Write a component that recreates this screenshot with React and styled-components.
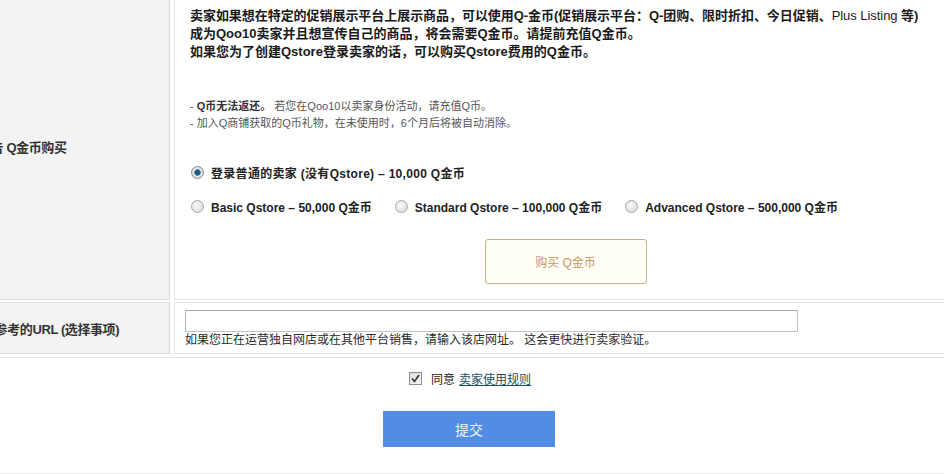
import styled, { createGlobalStyle, css } from "styled-components";

const GlobalStyle = createGlobalStyle`
  html, body {
    margin: 0;
    padding: 0;
    background: #fff;
    overflow: hidden;
  }
  body {
    font-family: "Liberation Sans", "Noto Sans CJK SC", sans-serif;
    color: #222;
  }
`;

const plans = [
  { id: "basic", label: "Basic Qstore – 50,000 Q金币" },
  { id: "standard", label: "Standard Qstore – 100,000 Q金币" },
  { id: "advanced", label: "Advanced Qstore – 500,000 Q金币" },
];

export default function App() {
  return (
    <>
      <GlobalStyle />
      <Page>
        <FormTable>
          <LabelCell $indent="0px">广告 Q金币购买</LabelCell>
          <ContentCell $pad="14px 15px 15px">
            <Intro>
              <Tight>
                卖家如果想在特定的促销展示平台上展示商品，可以使用Q-金币(促销展示平台：Q-团购、限时折扣、今日促销、<Plain>Plus Listing</Plain> 等)
              </Tight>
              <br />
              成为Qoo10卖家并且想宣传自己的商品，将会需要Q金币。请提前充值Q金币。
              <br />
              如果您为了创建Qstore登录卖家的话，可以购买Qstore费用的Q金币。
            </Intro>
            <Notes>
              <li>- <b>Q币无法返还。</b> 若您在Qoo10以卖家身份活动，请充值Q币。</li>
              <li>- 加入Q商铺获取的Q币礼物，在未使用时，6个月后将被自动消除。</li>
            </Notes>
            <RadioRow $top="30px">
              <RadioItem $wide>
                <Radio $checked />
                登录普通的卖家 (没有Qstore) – 10,000 Q金币
              </RadioItem>
            </RadioRow>
            <RadioRow $top="14px">
              {plans.map((p) => (
                <RadioItem key={p.id}>
                  <Radio />
                  {p.label}
                </RadioItem>
              ))}
            </RadioRow>
            <BuyRow>
              <BuyButton type="button">购买 Q金币</BuyButton>
            </BuyRow>
          </ContentCell>

          <LabelCell $indent="4px">可参考的URL (选择事项)</LabelCell>
          <ContentCell $pad="7px 10px 4px">
            <UrlInput type="text" />
            <Help>如果您正在运营独自网店或在其他平台销售，请输入该店网址。 这会更快进行卖家验证。</Help>
          </ContentCell>
        </FormTable>

        <Footer>
          <AgreeRow>
            <CheckBox>
              <svg width="9" height="9" viewBox="0 0 9 9">
                <polyline points="1,4.5 3.5,7.5 8,1" fill="none" stroke="#333" strokeWidth="1.6" />
              </svg>
            </CheckBox>
            同意 <TermsLink href="#">卖家使用规则</TermsLink>
          </AgreeRow>
          <SubmitButton type="button">提交</SubmitButton>
        </Footer>
      </Page>
    </>
  );
}

const Page = styled.div`
  margin: -8px 0 0 -22px;
  width: calc(100% + 22px);
`;

const FormTable = styled.div`
  display: grid;
  grid-template-columns: 192px 1fr;
  column-gap: 4px;
  row-gap: 2px;
`;

const LabelCell = styled.div`
  display: flex;
  align-items: center;
  padding-left: ${(p) => p.$indent};
  background: #f3f3f3;
  border-top: 1px solid #dedede;
  border-bottom: 1px solid #dedede;
  border-right: 1px solid #d8d8d8;
  font-size: 13px;
  font-weight: bold;
  letter-spacing: -0.4px;
  color: #333;
  white-space: nowrap;
  overflow: hidden;
`;

const ContentCell = styled.div`
  padding: ${(p) => p.$pad};
  border-top: 1px solid #e4e4e4;
  border-bottom: 1px solid #e4e4e4;
  border-left: 1px solid #e4e4e4;
`;

const Intro = styled.p`
  margin: 0;
  font-size: 13px;
  line-height: 18px;
  font-weight: bold;
  color: #1a1a1a;
  white-space: nowrap;
`;

const Tight = styled.span`
  letter-spacing: -0.05px;
`;

const Plain = styled.span`
  font-weight: normal;
`;

const Notes = styled.ul`
  list-style: none;
  margin: 37px 0 0;
  padding: 0;
  font-size: 11px;
  line-height: 17px;
  color: #555;

  b {
    color: #333;
  }
`;

const RadioRow = styled.div`
  display: flex;
  align-items: center;
  gap: 22px;
  height: 20px;
  margin-top: ${(p) => p.$top};
`;

const RadioItem = styled.label`
  display: flex;
  align-items: center;
  gap: 7px;
  font-size: 12px;
  font-weight: bold;
  color: #222;
  white-space: nowrap;
  letter-spacing: ${(p) => (p.$wide ? "0.3px" : "0")};
`;

const Radio = styled.span`
  width: 11px;
  height: 11px;
  margin-left: 1px;
  border-radius: 50%;
  border: 1px solid #a6a6a6;
  background: radial-gradient(circle at 40% 40%, #fafafa, #d4d4d4);
  ${(p) =>
    p.$checked &&
    css`
      border-color: #8a8a8a;
      background: radial-gradient(circle, #1d5a86 0 2.5px, #4c86b0 3px, #e6e6e6 3.6px, #cfcfcf 100%);
    `}
`;

const BuyRow = styled.div`
  display: flex;
  justify-content: center;
  padding-left: 12px;
  margin-top: 23px;
`;

const BuyButton = styled.button`
  width: 162px;
  height: 45px;
  border: 1px solid #bdb38c;
  border-radius: 3px;
  background: #fffff6;
  color: #c8955e;
  font-family: inherit;
  font-size: 12px;
  cursor: pointer;
`;

const UrlInput = styled.input`
  display: block;
  box-sizing: border-box;
  width: 613px;
  height: 22px;
  margin: 0;
  padding: 2px 4px;
  border: 1px solid #c4c4c4;
  border-top-color: #a8a8a8;
  border-left-color: #b4b4b4;
  font-family: inherit;
  font-size: 12px;
  outline: none;
`;

const Help = styled.p`
  margin: 0;
  font-size: 12px;
  line-height: 17px;
  color: #2a2a2a;
`;

const Footer = styled.div`
  margin-top: 3px;
  padding: 11px 0 26px 16px;
  border-top: 1px solid #e6e6e6;
  border-bottom: 2px solid #ececec;
  display: flex;
  flex-direction: column;
  align-items: center;
`;

const AgreeRow = styled.label`
  display: flex;
  align-items: center;
  height: 18px;
  gap: 4px;
  font-size: 12px;
  color: #222;
  padding-left: 2px;
`;

const CheckBox = styled.span`
  display: flex;
  align-items: center;
  justify-content: center;
  width: 11px;
  height: 11px;
  margin-right: 5px;
  border: 1px solid #8e8e8e;
  background: linear-gradient(135deg, #dcdcdc, #f6f6f6);
`;

const TermsLink = styled.a`
  color: #1a4f5e;
  text-decoration: underline;
`;

const SubmitButton = styled.button`
  margin-top: 24px;
  width: 172px;
  height: 36px;
  border: none;
  background: #528ce6;
  color: #eef3fc;
  font-family: inherit;
  font-size: 14px;
  cursor: pointer;
`;
